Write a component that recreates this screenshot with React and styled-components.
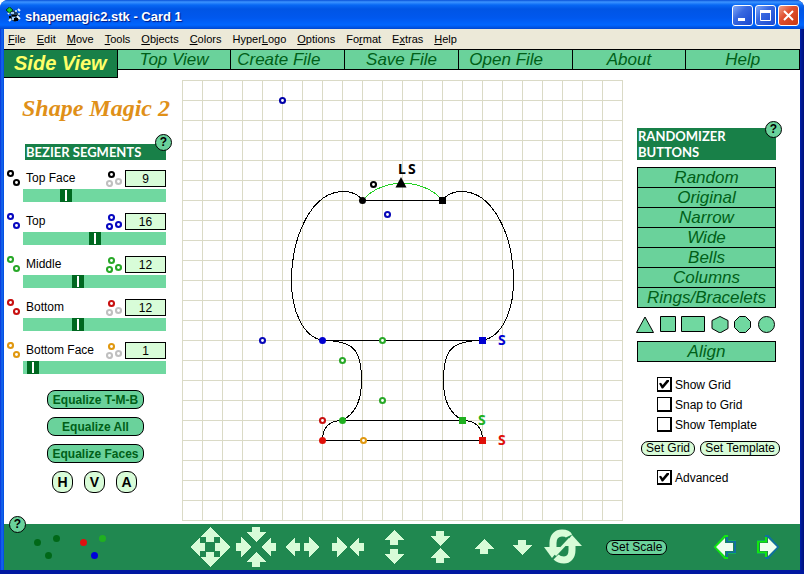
import React from "react";
import styled, { createGlobalStyle } from "styled-components";

const dark = "#208850";
const light = "#6ad29b";
const pale = "#d8fcd8";
const ink = "#006018";

const GlobalStyle = createGlobalStyle`
  * { box-sizing: border-box; }
  body { margin: 0; background: #fff; font-family: "Liberation Sans", Arial, sans-serif; font-size: 12px; color: #000; }
  button, input { font: inherit; color: inherit; margin: 0; padding: 0; }
  button { cursor: pointer; }
  h1, h2 { margin: 0; }
  svg { display: block; }
`;

const Window = styled.div`
  min-height: 100vh;
  display: flex;
  flex-direction: column;
  background: linear-gradient(90deg, #0831d9 0, #166aee 2px, #0048e0 4px, #0048e0 50%, #0020a8 calc(100% - 4px), #001078 100%);
  padding: 0 4px 4px;
  border-radius: 8px 8px 0 0;
  box-shadow: inset 0 -4px 0 #0018a0;
`;

const TitleBar = styled.header`
  height: 29px;
  margin: 0 -4px;
  padding: 1px 5px 0 6px;
  display: flex;
  align-items: center;
  gap: 2px;
  border-radius: 8px 8px 0 0;
  background: linear-gradient(180deg, #0850d8 0, #3c94ff 2px, #0868f4 5px, #0055e5 9px, #0058ee 18px, #0066ff 25px, #0048d0 29px);
`;

const WindowTitle = styled.h1`
  flex: 1;
  color: #fff;
  font: bold 13px/20px "Liberation Sans", Arial, sans-serif;
  text-shadow: 1px 1px 1px #001880;
  padding: 3px 0 0 1px;
`;

const Controls = styled.div`
  display: flex;
  gap: 2px;
`;

const ControlButton = styled.button`
  width: 21px;
  height: 21px;
  border: 1px solid #fff;
  border-radius: 3px;
  display: grid;
  place-items: center;
  background: ${(p) =>
    p.$close
      ? "linear-gradient(135deg, #f0a088, #e05030 40%, #c83810)"
      : "linear-gradient(135deg, #80a8f8, #3868e0 40%, #1848d0)"};
`;

const MenuBar = styled.nav`
  height: 20px;
  background: #ece9d8;
  display: flex;
  align-items: center;
  gap: 11px;
  padding-left: 4px;
`;

const MenuItem = styled.button`
  border: 0;
  background: none;
  font: 11px/16px "Liberation Sans", Arial, sans-serif;
  &::first-letter { text-decoration: ${(p) => (p.$plain ? "none" : "underline")}; }
`;

const TabBar = styled.nav`
  display: grid;
  grid-template-columns: repeat(7, 1fr);
  height: 21px;
  background: #fff;
`;

const Tab = styled.button`
  height: ${(p) => (p.$active ? "29px" : "21px")};
  position: relative;
  border: 1px solid #000;
  border-width: 1px 1px 1px 0;
  background: ${(p) => (p.$active ? "#188048" : light)};
  color: ${(p) => (p.$active ? "#ffff68" : ink)};
  font-style: italic;
  font-weight: ${(p) => (p.$active ? "bold" : "normal")};
  font-size: ${(p) => (p.$active ? "20px" : "17px")};
  line-height: 19px;
  white-space: nowrap;
  padding-right: ${(p) => (p.$early ? "18px" : "0")};
`;

const Main = styled.main`
  flex: 1;
  display: grid;
  grid-template-columns: 178px 1fr 178px;
  background: #fff;
`;

const LeftPanel = styled.section`
  padding: 23px 16px 24px 3px;
`;

const Logo = styled.h2`
  color: #e09018;
  font: italic bold 24px/30px "Liberation Serif", "Times New Roman", serif;
  white-space: nowrap;
  margin: 0 -8px 21px 15px;
`;

const PanelHeading = styled.h2`
  position: relative;
  background: #188048;
  color: #fff;
  font: bold 13px/16px Lato, sans-serif;
  white-space: nowrap;
  padding-left: 1px;
  margin-left: ${(p) => (p.$indent ? "18px" : "0")};
  margin-bottom: ${(p) => (p.$indent ? "10px" : "7px")};
`;

const HelpButton = styled.button`
  position: absolute;
  right: ${(p) => (p.$corner ? "auto" : "-6px")};
  left: ${(p) => (p.$corner ? "5px" : "auto")};
  top: ${(p) => (p.$corner ? "-8px" : p.$raised ? "-10px" : "-7px")};
  width: 17px;
  height: 17px;
  border: 1px solid #000;
  border-radius: 50%;
  background: ${light};
  color: #000;
  font: bold 12px/15px "Liberation Sans", Arial, sans-serif;
`;

const Segments = styled.div`
  display: grid;
  gap: 11px;
`;

const Segment = styled.div`
  display: grid;
  gap: 2px;
`;

const SegmentRow = styled.div`
  display: flex;
  align-items: center;
  height: 17px;
  gap: 3px;
`;

const SegmentLabel = styled.label`
  flex: 1;
  padding-left: 2px;
  line-height: 17px;
  white-space: nowrap;
`;

const NumberBox = styled.input`
  width: 41px;
  height: 17px;
  border: 1px solid #000;
  border-radius: 0;
  background: ${pale};
  text-align: center;
`;

const Slider = styled.input`
  appearance: none;
  display: block;
  width: calc(100% - 16px);
  height: 13px;
  margin-left: 16px;
  background: #70d8a0;
  &::-webkit-slider-thumb {
    appearance: none;
    width: 12px;
    height: 13px;
    background: linear-gradient(#fff, #fff) center / 2px 11px no-repeat #006820;
  }
`;

const EqualizeList = styled.div`
  display: grid;
  gap: 8px;
  justify-content: center;
  margin: 16px 0 8px 18px;
`;

const EqualizeButton = styled.button`
  width: 97px;
  height: 19px;
  border: 1px solid #000;
  border-radius: 8px;
  background: ${light};
  color: ${ink};
  font-weight: bold;
  white-space: nowrap;
`;

const AxisList = styled.div`
  display: flex;
  gap: 11px;
  justify-content: center;
  margin-left: 16px;
`;

const AxisButton = styled.button`
  width: 21px;
  height: 22px;
  border: 1px solid #000;
  border-radius: 9px;
  background: ${pale};
  font-weight: bold;
  font-size: 14px;
`;

const Canvas = styled.section`
  padding-top: 10px;
  svg { margin: 0 auto; }
`;

const RightPanel = styled.section`
  padding: 58px 25px 24px 14px;
`;

const RandomList = styled.div`
  display: grid;
  border: 1px solid #000;
  background: #000;
  gap: 1px;
`;

const RandomButton = styled.button`
  height: 19px;
  border: 0;
  background: ${light};
  color: ${ink};
  font-style: italic;
  font-size: 17px;
  line-height: 19px;
`;

const ShapeRow = styled.div`
  display: flex;
  justify-content: space-between;
  margin: 8px 1px 8px -1px;
`;

const ShapeButton = styled.button`
  border: 0;
  background: none;
`;

const Options = styled.div`
  display: grid;
  gap: 5px;
  margin: 15px 0 0 20px;
`;

const Option = styled.label`
  display: flex;
  align-items: center;
  gap: 3px;
  height: 15px;
  white-space: nowrap;
`;

const CheckBox = styled.input`
  appearance: none;
  width: 15px;
  height: 15px;
  border: 1px solid #000;
  border-width: 1px 2px 2px 1px;
  background: #fff;
  display: grid;
  place-items: center;
  &:checked::after {
    content: "";
    width: 10px;
    height: 9px;
    background: #000;
    clip-path: polygon(0 45%, 20% 35%, 36% 60%, 82% 0, 100% 0, 100% 22%, 40% 100%, 28% 100%);
  }
`;

const SetRow = styled.div`
  display: flex;
  justify-content: space-between;
  margin: 9px -4px -1px 4px;
`;

const PillButton = styled.button`
  height: 15px;
  padding: 0 4px;
  border: 1px solid #000;
  border-radius: 7px;
  background: ${(p) => (p.$dark ? light : pale)};
  line-height: 13px;
  white-space: nowrap;
`;

const Footer = styled.footer`
  position: relative;
  min-height: 46px;
  background: ${dark};
  display: flex;
  align-items: center;
  padding: 0 20px 0 29px;
`;

const DotGroups = styled.div`
  display: flex;
  gap: 18px;
  margin-right: 80px;
`;

const ToolButton = styled.button`
  width: ${(p) => p.$w}px;
  height: 46px;
  border: 0;
  background: none;
  display: grid;
  place-items: center;
`;

const ScaleSlot = styled.div`
  margin: 0 auto 0 19px;
`;

const NavButtons = styled.div`
  display: flex;
  gap: 19px;
`;

const Ring = ({ x, y, c }) => (
  <circle cx={x} cy={y} r="2.5" fill="#fff" stroke={c} strokeWidth="2.1" />
);

const Pair = ({ c }) => (
  <svg width="14" height="17" viewBox="0 0 14 17">
    <Ring x={3.5} y={3.5} c={c} />
    <Ring x={9.5} y={12.5} c={c} />
  </svg>
);

const Triple = ({ c, dim }) => (
  <svg width="16" height="17" viewBox="0 0 16 17">
    <Ring x={5.5} y={4.5} c={c} />
    <Ring x={12.5} y={11.5} c={dim ? "#c0c0c0" : c} />
    <Ring x={3.5} y={13.5} c={dim ? "#c0c0c0" : c} />
  </svg>
);

const segments = [
  { name: "Top Face", value: 9, color: "#000", dim: true },
  { name: "Top", value: 16, color: "#0808c0" },
  { name: "Middle", value: 12, color: "#28a828" },
  { name: "Bottom", value: 12, color: "#c81010", dim: true },
  { name: "Bottom Face", value: 1, color: "#e09810", dim: true },
];

const ticks = Array.from({ length: 23 }, (_, i) => i * 20);

const half =
  "M362 200C358 194 351 191 343 191C311 191 291 236 291 280C291 312 303 336 322 340" +
  "M322 340C352 340 361 348 361 380C361 402 354 413 342 420C327 420 322 428 322 440";

function Drawing() {
  return (
    <svg width="441" height="441" viewBox="182 80 441 441" role="img" aria-label="Side view profile">
      <g stroke="#dadac6" shapeRendering="crispEdges">
        {ticks.map((t) => (
          <path key={t} d={`M${182.5 + t} 80V521M182 ${80.5 + t}H623`} />
        ))}
      </g>
      <g transform="translate(.5 .5)" fill="none" stroke="#000" shapeRendering="crispEdges">
        <path d={half} />
        <path d={half} transform="translate(804 0) scale(-1 1)" />
        <path d="M362 200H442M322 340H482M342 420H462M322 440H482" />
        <path d="M362 200C381 177 423 177 442 200" stroke="#20d020" />
      </g>
      <g transform="translate(.5 .5)">
        <circle cx="362" cy="200" r="3.5" />
        <rect x="438.5" y="196.5" width="7" height="7" />
        <path d="M400.5 176.5L406 187H395Z" />
        <circle cx="322" cy="340" r="3.5" fill="#0000d0" />
        <rect x="478.5" y="336.5" width="7" height="7" fill="#0000d0" />
        <circle cx="342" cy="420" r="3.5" fill="#20b020" />
        <rect x="458.5" y="416.5" width="7" height="7" fill="#20b020" />
        <circle cx="322" cy="440" r="3.5" fill="#e01008" />
        <rect x="478.5" y="436.5" width="7" height="7" fill="#e01008" />
        <Ring x={282} y={100} c="#0000a8" />
        <Ring x={373} y={184} c="#000" />
        <Ring x={387} y={214} c="#0808b8" />
        <Ring x={262} y={340} c="#0808b8" />
        <Ring x={382} y={340} c="#28a828" />
        <Ring x={342} y={360} c="#28a828" />
        <Ring x={382} y={400} c="#28a828" />
        <Ring x={322} y={420} c="#c81010" />
        <Ring x={363} y={440} c="#e09810" />
      </g>
      <g fontFamily="Noto Sans, sans-serif" fontWeight="bold" fontSize="14">
        <text x="398" y="174">L</text>
        <text x="408" y="174">S</text>
        <text x="498" y="345" fill="#0000d0">S</text>
        <text x="478" y="425" fill="#20b020">S</text>
        <text x="498" y="445" fill="#e01008">S</text>
      </g>
    </svg>
  );
}

const up = "M0 -8L10 2H4V7H-4V2H-10Z";

const Arrow = ({ x = 0, y = 0, r = 0 }) => (
  <path d={up} fill={pale} transform={`translate(${x} ${y}) rotate(${r})`} shapeRendering="crispEdges" />
);

const ArrowSet = ({ list }) => (
  <svg width="42" height="42" viewBox="-21 -21 42 42">
    {list.map(([x, y, r]) => (
      <Arrow key={`${x},${y}`} x={x} y={y} r={r} />
    ))}
  </svg>
);

const tools = [
  { name: "Expand", w: 46, list: [[0, -12, 0], [12, 0, 90], [0, 12, 180], [-12, 0, 270]] },
  { name: "Contract", w: 46, list: [[0, -13, 180], [13, 0, 270], [0, 13, 0], [-13, 0, 90]] },
  { name: "Widen", w: 46, list: [[-9, 0, 270], [9, 0, 90]] },
  { name: "Narrow", w: 46, list: [[-9, 0, 90], [9, 0, 270]] },
  { name: "Lengthen", w: 46, list: [[0, -9, 0], [0, 9, 180]] },
  { name: "Shorten", w: 46, list: [[0, -9, 180], [0, 9, 0]] },
  { name: "Move up", w: 38, list: [[0, 0, 0]] },
  { name: "Move down", w: 38, list: [[0, 0, 180]] },
];

const NavArrow = ({ flip }) => (
  <svg width="24" height="26" viewBox="0 0 24 26">
    <g transform={flip ? "translate(24 0) scale(-1 1)" : undefined}>
      <path d="M2 13L12 2L14 2V7H22V19H14V24H12Z" fill={dark} stroke={flip ? "#1070a0" : "#10e810"} strokeWidth="2" />
      <path d="M14 3V7.5H22V18.5H14V23" fill="none" stroke={flip ? "#10e810" : "#1070a0"} strokeWidth="2" />
      <path d="M3 13L12 4V9H20V17H12V22Z" fill="#f0fff0" />
    </g>
  </svg>
);

const shapes = [
  ["Triangle", 18, <path d="M9 1L17.5 16.5H.5Z" />],
  ["Square", 16, <path d="M.5 .5H15.5V15.5H.5Z" />],
  ["Rectangle", 24, <path d="M.5 .5H23.5V15.5H.5Z" />],
  ["Hexagon", 18, <path d="M9 .5L17 4.5V12.5L9 17L1 12.5V4.5Z" />],
  ["Octagon", 18, <path d="M5.5 .5H11.5L16.5 5.5V11.5L11.5 16.5H5.5L.5 11.5V5.5Z" />],
  ["Circle", 17, <circle cx="8.5" cy="8.5" r="8" />],
];

const Check = ({ children, on }) => (
  <Option>
    <CheckBox type="checkbox" defaultChecked={on} />
    {children}
  </Option>
);

export default function App() {
  return (
    <Window>
      <GlobalStyle />
      <TitleBar>
        <svg width="16" height="16" viewBox="0 0 16 16">
          <path d="M3 2L9 4L13 7L14 12L9 15L3 12L5 8Z" fill="#204060" />
          <path d="M2 7L4 5M12 2L14 4M11 9L14 12M3 14L5 12" stroke="#e0f0ff" strokeWidth="2" />
          <path d="M5 5H8V7H5ZM9 3H11V5H9ZM6 10H9V13H6ZM12 6H14V8H12Z" fill="#a0c8f0" />
          <path d="M6 8H11V9H6ZM8 11H12V14H8ZM3 9H5V11H3Z" fill="#000" />
          <path d="M3.5 0L7 3L3.5 6L0 3Z" fill="#18c830" stroke="#083818" />
        </svg>
        <WindowTitle>shapemagic2.stk - Card 1</WindowTitle>
        <Controls>
          <ControlButton aria-label="Minimize">
            <svg width="17" height="17"><path d="M4 11H11V14H4Z" fill="#fff" /></svg>
          </ControlButton>
          <ControlButton aria-label="Maximize">
            <svg width="17" height="17"><path d="M3.5 4.5H13.5V13.5H3.5Z" fill="none" stroke="#fff" /><path d="M3 3H14V6H3Z" fill="#fff" /></svg>
          </ControlButton>
          <ControlButton $close aria-label="Close">
            <svg width="17" height="17"><path d="M4 4L13 13M13 4L4 13" stroke="#fff" strokeWidth="2" /></svg>
          </ControlButton>
        </Controls>
      </TitleBar>
      <MenuBar>
        <MenuItem>File</MenuItem>
        <MenuItem>Edit</MenuItem>
        <MenuItem>Move</MenuItem>
        <MenuItem>Tools</MenuItem>
        <MenuItem>Objects</MenuItem>
        <MenuItem>Colors</MenuItem>
        <MenuItem $plain>Hyper<u>L</u>ogo</MenuItem>
        <MenuItem>Options</MenuItem>
        <MenuItem $plain>Fo<u>r</u>mat</MenuItem>
        <MenuItem $plain>E<u>x</u>tras</MenuItem>
        <MenuItem>Help</MenuItem>
      </MenuBar>
      <TabBar>
        <Tab $active>Side View</Tab>
        <Tab>Top View</Tab>
        <Tab $early>Create File</Tab>
        <Tab>Save File</Tab>
        <Tab $early>Open File</Tab>
        <Tab>About</Tab>
        <Tab>Help</Tab>
      </TabBar>
      <Main>
        <LeftPanel>
          <Logo>Shape Magic 2</Logo>
          <PanelHeading $indent>
            BEZIER SEGMENTS
            <HelpButton $raised>?</HelpButton>
          </PanelHeading>
          <Segments>
            {segments.map((s, i) => (
              <Segment key={s.name}>
                <SegmentRow>
                  <Pair c={s.color} />
                  <SegmentLabel htmlFor={`segment-${i}`}>{s.name}</SegmentLabel>
                  <Triple c={s.color} dim={s.dim} />
                  <NumberBox id={`segment-${i}`} defaultValue={s.value} />
                </SegmentRow>
                <Slider type="range" min="0" max="32" defaultValue={s.value} aria-label={`${s.name} segments`} />
              </Segment>
            ))}
          </Segments>
          <EqualizeList>
            <EqualizeButton>Equalize T-M-B</EqualizeButton>
            <EqualizeButton>Equalize All</EqualizeButton>
            <EqualizeButton>Equalize Faces</EqualizeButton>
          </EqualizeList>
          <AxisList>
            <AxisButton>H</AxisButton>
            <AxisButton>V</AxisButton>
            <AxisButton>A</AxisButton>
          </AxisList>
        </LeftPanel>
        <Canvas>
          <Drawing />
        </Canvas>
        <RightPanel>
          <PanelHeading>
            RANDOMIZER
            <br />
            BUTTONS
            <HelpButton>?</HelpButton>
          </PanelHeading>
          <RandomList>
            {["Random", "Original", "Narrow", "Wide", "Bells", "Columns", "Rings/Bracelets"].map((n) => (
              <RandomButton key={n}>{n}</RandomButton>
            ))}
          </RandomList>
          <ShapeRow>
            {shapes.map(([name, w, shape]) => (
              <ShapeButton key={name} aria-label={name}>
                <svg width={w} height="17" fill="#70d8a0" stroke="#000">{shape}</svg>
              </ShapeButton>
            ))}
          </ShapeRow>
          <RandomList>
            <RandomButton>Align</RandomButton>
          </RandomList>
          <Options>
            <Check on>Show Grid</Check>
            <Check>Snap to Grid</Check>
            <Check>Show Template</Check>
          </Options>
          <SetRow>
            <PillButton>Set Grid</PillButton>
            <PillButton>Set Template</PillButton>
          </SetRow>
          <Options>
            <Check on>Advanced</Check>
          </Options>
        </RightPanel>
      </Main>
      <Footer>
        <HelpButton $corner>?</HelpButton>
        <DotGroups>
          <svg width="28" height="24" fill="#006818">
            <circle cx="4.5" cy="7.5" r="3.5" />
            <circle cx="23.5" cy="3.5" r="3.5" />
            <circle cx="15.5" cy="20.5" r="3.5" />
          </svg>
          <svg width="28" height="24">
            <circle cx="4.5" cy="7.5" r="3.5" fill="#e01010" />
            <circle cx="23.5" cy="3.5" r="3.5" fill="#20b020" />
            <circle cx="15.5" cy="20.5" r="3.5" fill="#0000d8" />
          </svg>
        </DotGroups>
        {tools.map((t) => (
          <ToolButton key={t.name} $w={t.w} aria-label={t.name}>
            <ArrowSet list={t.list} />
          </ToolButton>
        ))}
        <ToolButton $w={48} aria-label="Rotate">
          <svg width="38" height="36" viewBox="0 0 38 36">
            <path d="M9 20V14C9 7 13 4 18 4C22 4 24 5 25 7" fill="none" stroke={pale} strokeWidth="7" />
            <path d="M0 18H17L8 29Z" fill={pale} />
            <path d="M28 15V21C28 28 24 31 20 31C16 31 14 30 12 28" fill="none" stroke={pale} strokeWidth="7" />
            <path d="M19 17H38L28 6Z" fill={pale} />
            <path d="M11 26L26 10" stroke={pale} strokeWidth="3" />
          </svg>
        </ToolButton>
        <ScaleSlot>
          <PillButton $dark>Set Scale</PillButton>
        </ScaleSlot>
        <NavButtons>
          <ToolButton $w={24} aria-label="Previous card"><NavArrow /></ToolButton>
          <ToolButton $w={24} aria-label="Next card"><NavArrow flip /></ToolButton>
        </NavButtons>
      </Footer>
    </Window>
  );
}
